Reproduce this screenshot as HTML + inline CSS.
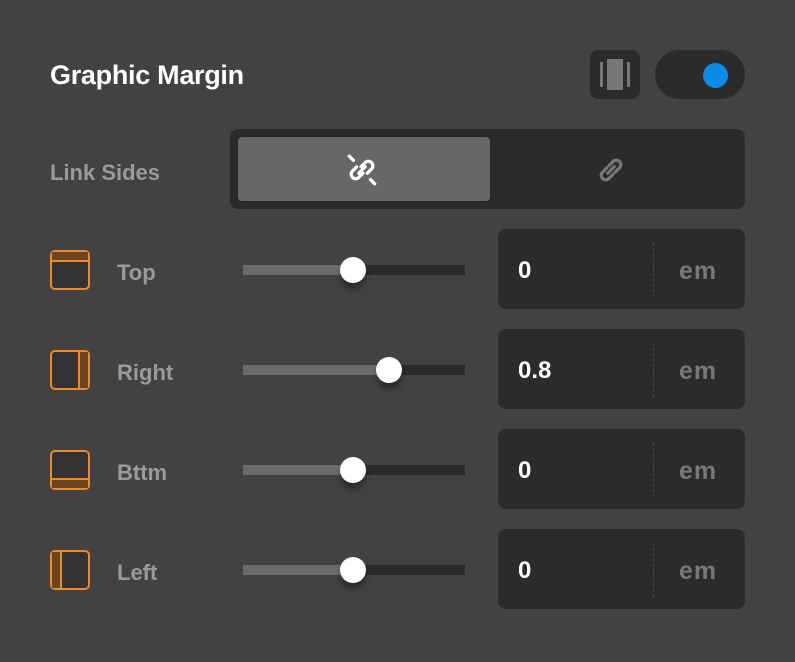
<!DOCTYPE html>
<html><head><style>
body{margin:0;width:795px;height:662px;background:#424242;font-family:"Liberation Sans",sans-serif;position:relative;overflow:hidden}
.a{position:absolute}
.title{left:50px;top:60px;font-size:27px;font-weight:bold;color:#fff;letter-spacing:-0.3px}
.lbl{font-size:22px;color:#9a9a9a;font-weight:bold}
.box{background:#2b2b2b;border-radius:8px}
.track{height:10px;background:#2a2a2a;left:243px;width:222px}
.fill{height:10px;background:#6b6b6b;left:0;top:0}
.thumb{width:26px;height:26px;border-radius:50%;background:#fff;top:-8px;box-shadow:0 6px 6px rgba(0,0,0,.35)}
.val{left:20px;top:28px;font-size:24px;font-weight:bold;color:#fff}
.em{left:181px;top:28px;font-size:25px;font-weight:bold;color:#777;letter-spacing:1px}
.dash{left:155px;top:14px;height:54px;border-left:1px dashed #4a4a4a}
</style></head><body>
<div class="a title">Graphic Margin</div>
<div class="a box" style="left:590px;top:50px;width:50px;height:49px">
<div class="a" style="left:10px;top:12px;width:3px;height:25px;background:#777"></div>
<div class="a" style="left:17px;top:9px;width:16px;height:31px;background:#777"></div>
<div class="a" style="left:37px;top:12px;width:3px;height:25px;background:#777"></div>
</div>
<div class="a box" style="left:655px;top:50px;width:90px;height:49px;border-radius:25px">
<div class="a" style="left:48px;top:13px;width:25px;height:25px;border-radius:50%;background:#0a8be6"></div>
</div>
<div class="a lbl" style="left:50px;top:160px;">Link Sides</div>
<div class="a box" style="left:230px;top:129px;width:515px;height:80px">
<div class="a" style="left:8px;top:8px;width:252px;height:64px;background:#676767;border-radius:4px"></div>
<svg class="a" style="left:115px;top:24px" width="34" height="34" viewBox="0 0 32 32" fill="none" stroke="#fff" stroke-width="3" stroke-linecap="round">
<path d="M4 3l4 4M24 25l4 4M11 13l-4 4a4 4 0 0 0 6 6l4-4M21 19l4-4a4 4 0 0 0-6-6l-4 4M13 19l6-6"/></svg>
<svg class="a" style="left:364px;top:24px" width="34" height="34" viewBox="0 0 32 32" fill="none" stroke="#777" stroke-width="3" stroke-linecap="round">
<path d="M12 14l-4 4a4 4 0 0 0 6 6l4-4M20 18l4-4a4 4 0 0 0-6-6l-4 4M13 19l6-6"/></svg>
</div>

<svg class="a" style="left:50px;top:250px" width="40" height="40"><rect x="1" y="1" width="38" height="38" rx="4" fill="#333" stroke="#f08a24" stroke-width="2"/><rect x="2" y="2" width="36" height="8" fill="#6b4522"/><line x1="1" y1="11" x2="39" y2="11" stroke="#f08a24" stroke-width="2"/></svg>
<div class="a lbl" style="left:117px;top:260px">Top</div>
<div class="a track" style="top:265px"><div class="a fill" style="width:110px"></div><div class="a thumb" style="left:97px"></div></div>
<div class="a box" style="left:498px;top:229px;width:247px;height:80px"><div class="a val">0</div><div class="a dash"></div><div class="a em">em</div></div>

<svg class="a" style="left:50px;top:350px" width="40" height="40"><rect x="1" y="1" width="38" height="38" rx="4" fill="#333" stroke="#f08a24" stroke-width="2"/><rect x="30" y="2" width="8" height="36" fill="#6b4522"/><line x1="29" y1="1" x2="29" y2="39" stroke="#f08a24" stroke-width="2"/></svg>
<div class="a lbl" style="left:117px;top:360px">Right</div>
<div class="a track" style="top:365px"><div class="a fill" style="width:146px"></div><div class="a thumb" style="left:133px"></div></div>
<div class="a box" style="left:498px;top:329px;width:247px;height:80px"><div class="a val">0.8</div><div class="a dash"></div><div class="a em">em</div></div>

<svg class="a" style="left:50px;top:450px" width="40" height="40"><rect x="1" y="1" width="38" height="38" rx="4" fill="#333" stroke="#f08a24" stroke-width="2"/><rect x="2" y="30" width="36" height="8" fill="#6b4522"/><line x1="1" y1="29" x2="39" y2="29" stroke="#f08a24" stroke-width="2"/></svg>
<div class="a lbl" style="left:117px;top:460px">Bttm</div>
<div class="a track" style="top:465px"><div class="a fill" style="width:110px"></div><div class="a thumb" style="left:97px"></div></div>
<div class="a box" style="left:498px;top:429px;width:247px;height:80px"><div class="a val">0</div><div class="a dash"></div><div class="a em">em</div></div>

<svg class="a" style="left:50px;top:550px" width="40" height="40"><rect x="1" y="1" width="38" height="38" rx="4" fill="#333" stroke="#f08a24" stroke-width="2"/><rect x="2" y="2" width="8" height="36" fill="#6b4522"/><line x1="11" y1="1" x2="11" y2="39" stroke="#f08a24" stroke-width="2"/></svg>
<div class="a lbl" style="left:117px;top:560px">Left</div>
<div class="a track" style="top:565px"><div class="a fill" style="width:110px"></div><div class="a thumb" style="left:97px"></div></div>
<div class="a box" style="left:498px;top:529px;width:247px;height:80px"><div class="a val">0</div><div class="a dash"></div><div class="a em">em</div></div>
</body></html>
